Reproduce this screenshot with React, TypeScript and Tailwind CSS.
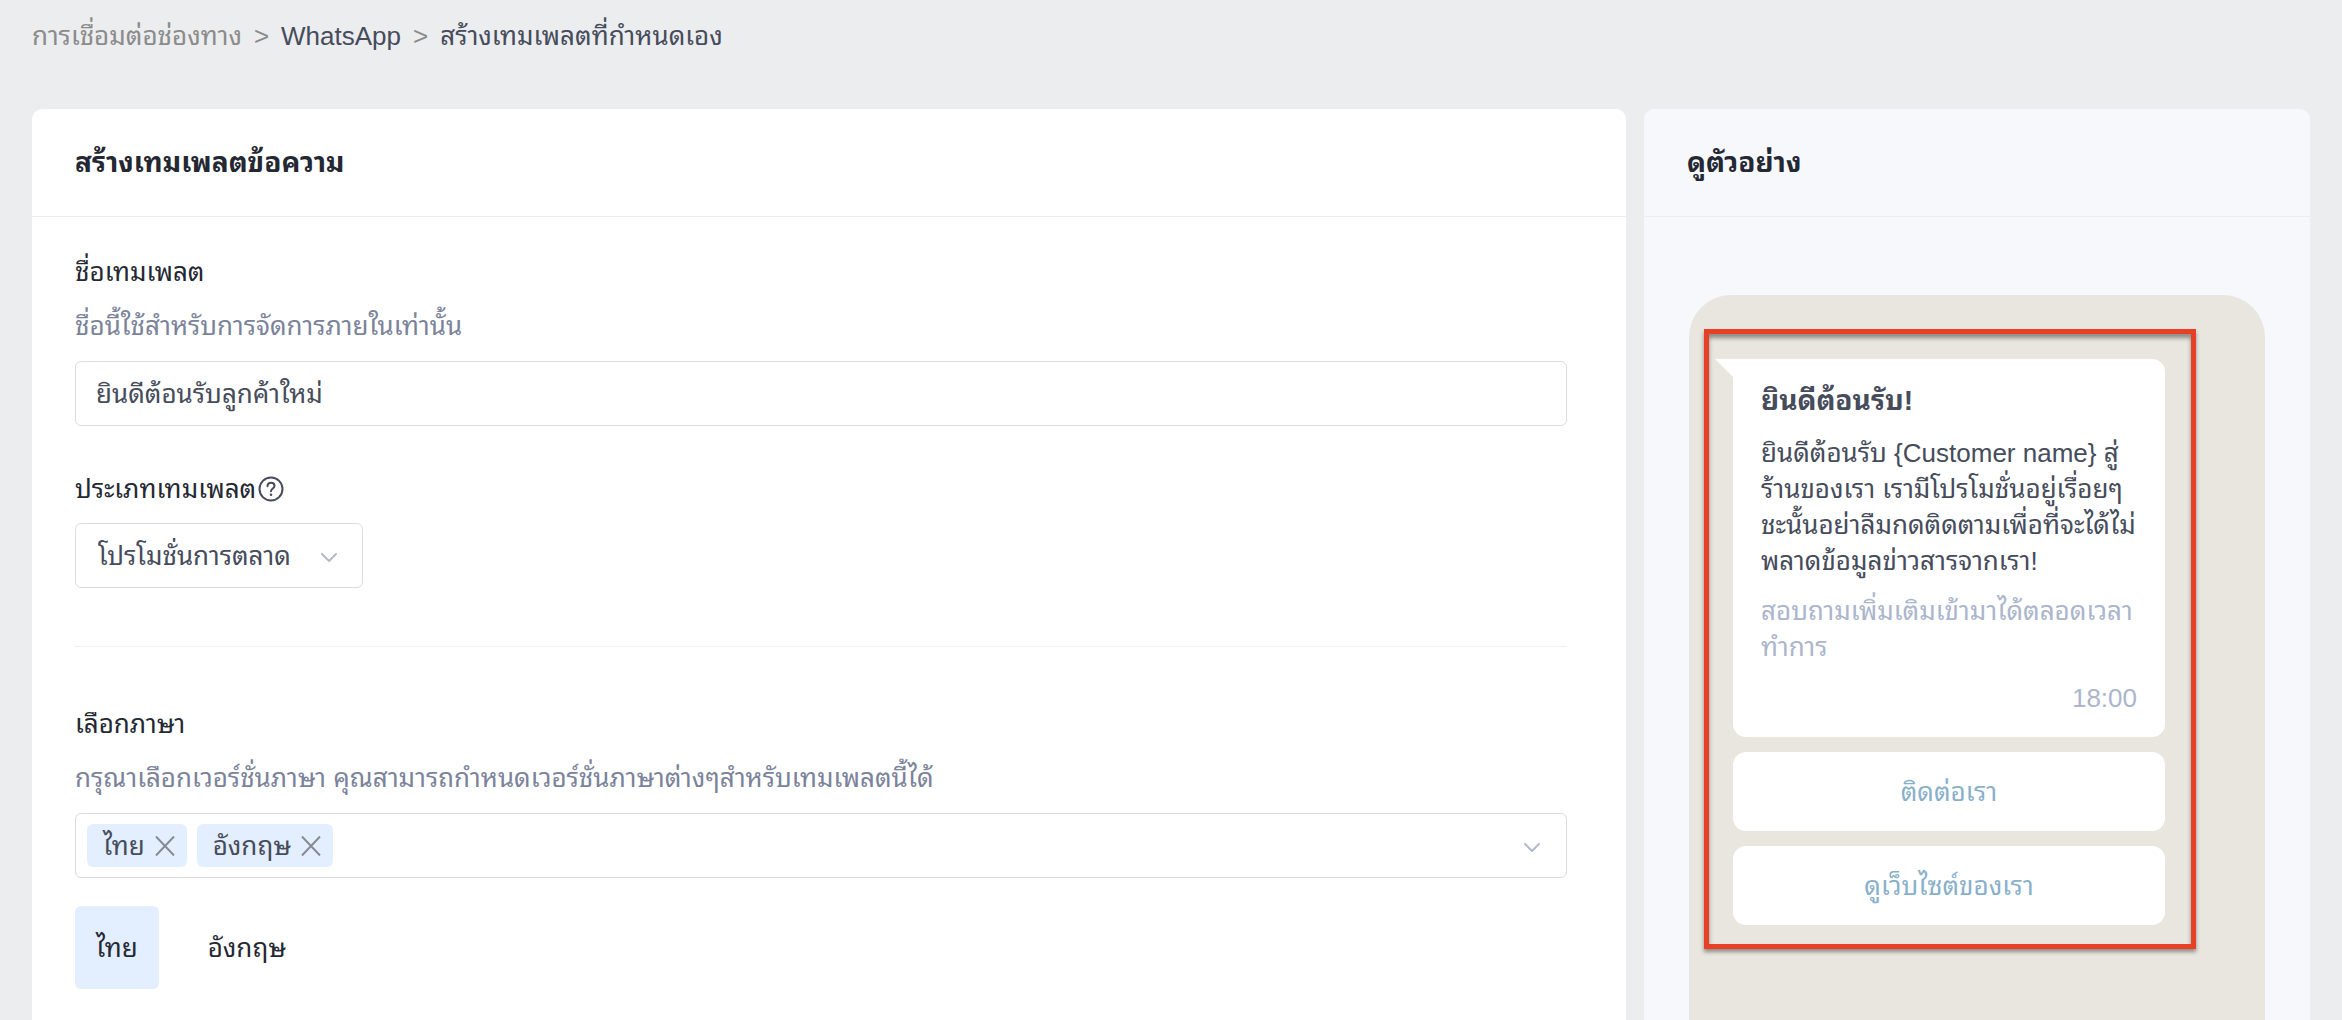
import { useState } from 'react';
import type { ReactNode } from 'react';

const languages = ['ไทย', 'อังกฤษ'];

const messageLines = [
  'ยินดีต้อนรับ {Customer name} สู่',
  'ร้านของเรา เรามีโปรโมชั่นอยู่เรื่อยๆ',
  'ชะนั้นอย่าลืมกดติดตามเพื่อที่จะได้ไม่',
  'พลาดข้อมูลข่าวสารจากเรา!',
];

const footerLines = ['สอบถามเพิ่มเติมเข้ามาได้ตลอดเวลา', 'ทำการ'];

const replyButtons = ['ติดต่อเรา', 'ดูเว็บไซต์ของเรา'];

function ChevronIcon() {
  return (
    <svg viewBox="0 0 18 12" className="w-[18px] h-3" fill="none" stroke="#b3b9c9" strokeWidth="2" strokeLinecap="round" strokeLinejoin="round">
      <path d="M2 2l7 7 7-7" />
    </svg>
  );
}

function CloseIcon() {
  return (
    <svg viewBox="0 0 20 20" className="w-5 h-5" fill="none" stroke="#858a93" strokeWidth="2">
      <path d="M1 0.5l18 19M19 0.5l-18 19" />
    </svg>
  );
}

function HelpIcon() {
  return (
    <svg viewBox="0 0 26 26" className="w-[26px] h-[26px]" fill="none" stroke="#464c5b" strokeWidth="2" strokeLinecap="round">
      <circle cx="13" cy="13" r="11.5" />
      <path d="M9.5 10.2c0-2.2 1.5-3.5 3.5-3.5s3.5 1.3 3.5 3.2c0 2.5-3.5 2.8-3.5 5.3" />
      <circle cx="13" cy="18.8" r="1.3" fill="#464c5b" stroke="none" />
    </svg>
  );
}

function CardHeader({ children }: { children: ReactNode }) {
  return (
    <header className="flex items-center h-[108px] px-[43px] border-b border-[#ebedf0]">
      <h2 className="text-[28px] leading-9 font-bold text-[#242833]">{children}</h2>
    </header>
  );
}

function Breadcrumb() {
  return (
    <nav className="flex items-center gap-3 h-[109px] pb-[38px] px-8 text-[#464c5b]">
      <a href="#channels" className="text-[#8b8b8b]">การเชื่อมต่อช่องทาง</a>
      <span className="text-[#8b8b8b]">&gt;</span>
      <a href="#whatsapp">WhatsApp</a>
      <span className="text-[#8b8b8b]">&gt;</span>
      <span>สร้างเทมเพลตที่กำหนดเอง</span>
    </nav>
  );
}

function TemplateForm() {
  const [name, setName] = useState('ยินดีต้อนรับลูกค้าใหม่');
  const [selected, setSelected] = useState(languages);
  const [active, setActive] = useState(languages[0]);

  return (
    <section className="rounded-t-[10px] bg-white">
      <CardHeader>สร้างเทมเพลตข้อความ</CardHeader>
      <div className="flex flex-col pl-[43px] pr-[59px] pt-[37px]">
        <label htmlFor="template-name" className="text-[#242833]">ชื่อเทมเพลต</label>
        <p className="mt-[18px] text-[#7b839a]">ชื่อนี้ใช้สำหรับการจัดการภายในเท่านั้น</p>
        <input
          id="template-name"
          value={name}
          onChange={(e) => setName(e.target.value)}
          className="mt-[17px] h-[65px] px-5 pb-1.5 rounded-md border border-[#d9dbe7] outline-none"
        />

        <div className="flex items-center gap-0.5 mt-[45px] text-[#242833]">
          <label htmlFor="template-type">ประเภทเทมเพลต</label>
          <button type="button" aria-label="ประเภทเทมเพลต">
            <HelpIcon />
          </button>
        </div>
        <div className="grid items-center w-[288px] mt-4">
          <select
            id="template-type"
            className="col-start-1 row-start-1 h-[65px] px-[22px] rounded-md border border-[#d9dbe7] bg-white appearance-none outline-none"
          >
            <option>โปรโมชั่นการตลาด</option>
          </select>
          <span className="col-start-1 row-start-1 justify-self-end pr-[25px] pt-1 pointer-events-none">
            <ChevronIcon />
          </span>
        </div>

        <hr className="mt-[58px] border-[#eef0f4]" />

        <h3 className="mt-[59px] text-[#242833]">เลือกภาษา</h3>
        <p className="mt-[18px] text-[#7b839a]">
          กรุณาเลือกเวอร์ชั่นภาษา คุณสามารถกำหนดเวอร์ชั่นภาษาต่างๆสำหรับเทมเพลตนี้ได้
        </p>
        <div className="flex items-center gap-2.5 h-[65px] mt-[17px] pl-[11px] pr-[25px] rounded-md border border-[#d9dbe7]">
          {selected.map((lang) => (
            <span key={lang} className="flex items-center gap-2.5 h-[43px] pl-4 pr-3 rounded-md bg-[#e3effe]">
              {lang}
              <button type="button" aria-label={lang} onClick={() => setSelected(selected.filter((l) => l !== lang))}>
                <CloseIcon />
              </button>
            </span>
          ))}
          <button type="button" aria-label="เลือกภาษา" className="ml-auto pt-1">
            <ChevronIcon />
          </button>
        </div>

        <div className="flex gap-7 mt-7">
          {languages.map((lang) => (
            <button
              key={lang}
              type="button"
              onClick={() => setActive(lang)}
              className={
                lang === active
                  ? 'h-[83px] px-[21px] rounded-md bg-[#e3effe] text-[#242833]'
                  : 'h-[83px] px-[21px] rounded-md text-[#242833]'
              }
            >
              {lang}
            </button>
          ))}
        </div>
      </div>
    </section>
  );
}

function Preview() {
  return (
    <section className="flex flex-col rounded-t-[10px] bg-[#f6f8fc]">
      <CardHeader>ดูตัวอย่าง</CardHeader>
      <div className="flex-1 mx-[45px] mt-[78px] pt-[34px] pl-[15px] pr-[69px] rounded-t-[42px] bg-[#e8e6df]">
        <div className="flex flex-col gap-[15px] pt-[25px] pb-[19px] pl-6 pr-[26px] border-[5px] border-[#e84025] shadow-[0_3px_4px_rgba(0,0,0,0.4),inset_0_4px_4px_rgba(0,0,0,0.4)]">
          <div className="relative p-7 pt-6 pb-[21px] rounded-[13px] rounded-tl-none bg-white">
            {/* bubble tail */}
            <svg viewBox="0 0 18 18" className="absolute top-0 -left-[18px] w-[18px] h-[18px]" fill="#fff">
              <path d="M0 0h18v18z" />
            </svg>
            <h3 className="text-[28px] leading-9 font-bold">ยินดีต้อนรับ!</h3>
            <p className="mt-4 whitespace-nowrap">
              {messageLines.map((line) => (
                <span key={line} className="block">{line}</span>
              ))}
            </p>
            <p className="mt-3.5 whitespace-nowrap text-[#abb5cc]">
              {footerLines.map((line) => (
                <span key={line} className="block">{line}</span>
              ))}
            </p>
            <time className="block mt-[15px] text-right text-[#abb5cc]">18:00</time>
          </div>
          {replyButtons.map((label) => (
            <button key={label} type="button" className="h-[79px] rounded-[13px] bg-white text-[#89b0cb]">
              {label}
            </button>
          ))}
        </div>
      </div>
    </section>
  );
}

export default function App() {
  return (
    <div className="flex flex-col min-h-screen bg-[#ecedef] font-['Liberation_Sans','Noto_Sans_Thai_Looped','Loma','Noto_Sans_Thai',sans-serif] text-[26px] leading-9 text-[#464c5b]">
      <Breadcrumb />
      <main className="flex-1 grid grid-cols-[minmax(0,1594fr)_minmax(0,666fr)] gap-[18px] px-8">
        <TemplateForm />
        <Preview />
      </main>
    </div>
  );
}
